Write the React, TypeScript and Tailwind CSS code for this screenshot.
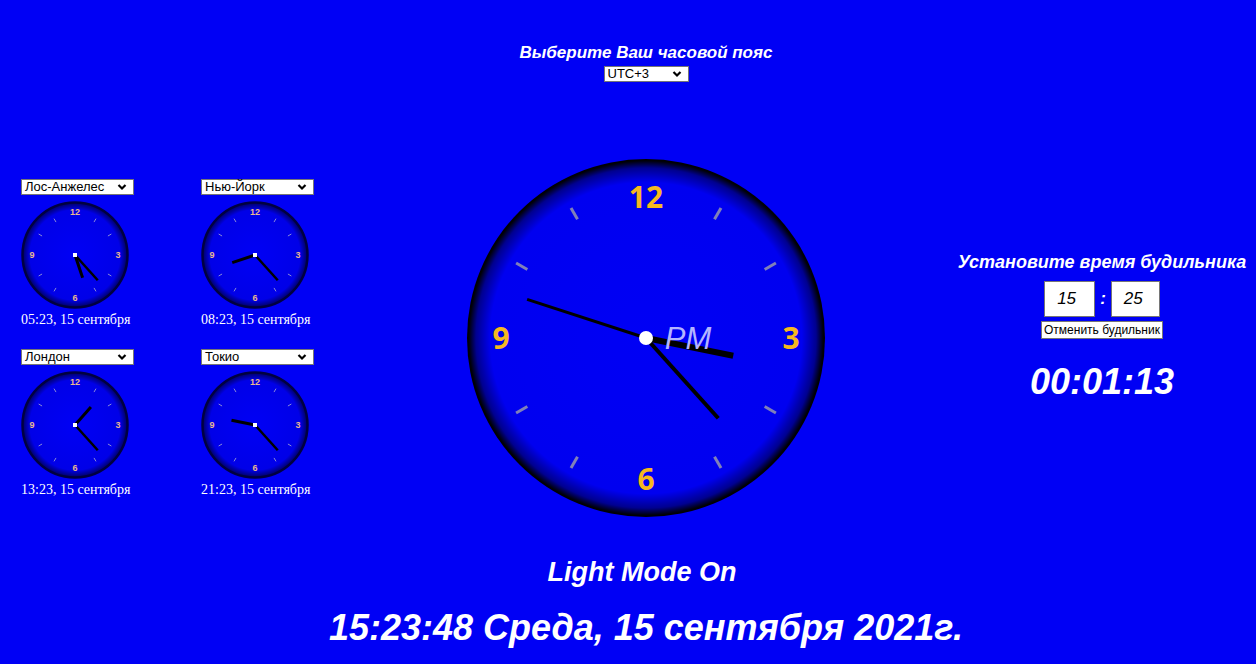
import React from 'react';

const ARIAL = { fontFamily: '"Liberation Sans", Arial, sans-serif' };
const SERIF = { fontFamily: '"Liberation Serif", "Times New Roman", serif' };

const pt = (cx: number, cy: number, deg: number, r: number) => {
  const a = (deg * Math.PI) / 180;
  return [cx + r * Math.sin(a), cy - r * Math.cos(a)];
};

const Chevron: React.FC = () => (
  <svg width="10" height="7" viewBox="0 0 10 7" className="absolute right-[6px] top-1/2 -translate-y-1/2">
    <path d="M1.5 1.5 L5 5 L8.5 1.5" fill="none" stroke="#000" strokeWidth="2.2" />
  </svg>
);

const Select: React.FC<{ value: string; w: string }> = ({ value, w }) => (
  <div className={`relative ${w} h-[16px] bg-white border border-[#767676] text-[13px] leading-[14px] text-black pl-[3px]`} style={ARIAL}>
    {value}
    <Chevron />
  </div>
);

const SmallClock: React.FC<{ h: number; m: number; city: string; label: string }> = ({ h, m, city, label }) => {
  const c = 54;
  const hourDeg = (h % 12) * 30 + m * 0.5;
  const minDeg = m * 6;
  const [hx, hy] = pt(c, c, hourDeg, 24);
  const [mx, my] = pt(c, c, minDeg, 34);
  return (
    <div className="flex flex-col w-[113px]">
      <Select value={city} w="w-[113px]" />
      <svg width="108" height="108" viewBox="0 0 108 108" className="mt-[6px]">
        <defs>
          <radialGradient id="sg" cx="50%" cy="50%" r="50%">
            <stop offset="0%" stopColor="#0000f5" />
            <stop offset="86%" stopColor="#0000e8" />
            <stop offset="100%" stopColor="#000060" />
          </radialGradient>
        </defs>
        <circle cx={c} cy={c} r={52.5} fill="url(#sg)" stroke="#000040" strokeWidth="2.5" />
        {[1, 2, 4, 5, 7, 8, 10, 11].map((i) => {
          const [x1, y1] = pt(c, c, i * 30, 38);
          const [x2, y2] = pt(c, c, i * 30, 42);
          return <line key={i} x1={x1} y1={y1} x2={x2} y2={y2} stroke="#8a8ad8" strokeWidth="1" />;
        })}
        {[
          ['12', 0],
          ['3', 90],
          ['6', 180],
          ['9', 270],
        ].map(([t, d]) => {
          const [x, y] = pt(c, c, d as number, 43);
          return (
            <text key={t} x={x} y={y + 3} textAnchor="middle" fontSize="9" fontWeight="bold" fill="#e8b890" style={ARIAL}>
              {t}
            </text>
          );
        })}
        <line x1={c} y1={c} x2={hx} y2={hy} stroke="#000" strokeWidth="3" />
        <line x1={c} y1={c} x2={mx} y2={my} stroke="#000" strokeWidth="2.5" />
        <rect x={c - 2} y={c - 2} width="4" height="4" fill="#fff" />
      </svg>
      <div className="text-white text-[14px] leading-[16px] mt-[3px] whitespace-nowrap" style={SERIF}>
        {label}
      </div>
    </div>
  );
};

const BigClock: React.FC = () => {
  const c = 180;
  const [hx, hy] = pt(c, c, 101.5, 89);
  const [mx, my] = pt(c, c, 138, 108);
  const [sx, sy] = pt(c, c, 288, 125);
  return (
    <svg width="360" height="360" viewBox="0 0 360 360">
      <defs>
        <radialGradient id="bg" cx="50%" cy="50%" r="50%">
          <stop offset="0%" stopColor="#0000f5" />
          <stop offset="87%" stopColor="#0000f0" />
          <stop offset="95%" stopColor="#000090" />
          <stop offset="99%" stopColor="#000008" />
          <stop offset="100%" stopColor="#000000" />
        </radialGradient>
      </defs>
      <circle cx={c} cy={c} r={179} fill="url(#bg)" />
      {[1, 2, 4, 5, 7, 8, 10, 11].map((i) => {
        const [x1, y1] = pt(c, c, i * 30, 137);
        const [x2, y2] = pt(c, c, i * 30, 150);
        return <line key={i} x1={x1} y1={y1} x2={x2} y2={y2} stroke="#8080b8" strokeWidth="3" />;
      })}
      {[
        ['12', 0, 141],
        ['3', 90, 145],
        ['6', 180, 141],
        ['9', 270, 145],
      ].map(([t, d, r]) => {
        const [x, y] = pt(c, c, d as number, r as number);
        return (
          <text key={t as string} x={x} y={y + 11} textAnchor="middle" fontSize="30" fontWeight="bold" fill="#f5b820" style={{ fontFamily: '"Open Sans", Roboto, sans-serif' }}>
            {t}
          </text>
        );
      })}
      <line x1={c} y1={c} x2={hx} y2={hy} stroke="#000" strokeWidth="6" />
      <line x1={c} y1={c} x2={mx} y2={my} stroke="#000" strokeWidth="4" />
      <line x1={c} y1={c} x2={sx} y2={sy} stroke="#000" strokeWidth="3" />
      <text x={222} y={191} textAnchor="middle" fontSize="31" fontStyle="italic" fill="#b4b4ff" style={ARIAL}>
        PM
      </text>
      <circle cx={c} cy={c} r="7" fill="#fff" />
    </svg>
  );
};

const App: React.FC = () => {
  return (
    <div className="w-full h-[664px] bg-[#0000f5] overflow-hidden text-white" style={ARIAL}>
      <div className="pl-[36px] pt-[43px] flex flex-col items-center">
        <h2 className="text-[17px] leading-[20px] font-bold italic">Выберите Ваш часовой пояс</h2>
        <div className="mt-[3px]">
          <Select value="UTC+3" w="w-[85px]" />
        </div>
      </div>

      <div className="flex items-center mt-[76px] pl-[21px]">
        <div className="grid grid-cols-2 gap-x-[67px] gap-y-[21px] w-[293px]">
          <SmallClock h={5} m={23} city="Лос-Анжелес" label="05:23, 15 сентября" />
          <SmallClock h={8} m={23} city="Нью-Йорк" label="08:23, 15 сентября" />
          <SmallClock h={13} m={23} city="Лондон" label="13:23, 15 сентября" />
          <SmallClock h={21} m={23} city="Токио" label="21:23, 15 сентября" />
        </div>

        <div className="ml-[152px]">
          <BigClock />
        </div>

        <div className="ml-[130px] w-[292px] flex flex-col items-center mb-[22px]">
          <h3 className="text-[18px] leading-[20px] font-bold italic whitespace-nowrap">Установите время будильника</h3>
          <div className="flex items-center mt-[9px]">
            <div className="w-[51px] h-[36px] bg-white border border-[#767676] text-black italic text-[17px] leading-[34px] pl-[12px]">15</div>
            <span className="mx-[5px] font-bold italic text-[17px]">:</span>
            <div className="w-[49px] h-[36px] bg-white border border-[#767676] text-black italic text-[17px] leading-[34px] pl-[12px]">25</div>
          </div>
          <button className="mt-[4px] h-[18px] px-[2px] bg-white border border-[#767676] text-black text-[12px] leading-[16px]">
            Отменить будильник
          </button>
          <div className="mt-[23px] text-[36px] leading-[40px] font-bold italic">00:01:13</div>
        </div>
      </div>

      <div className="pl-[36px] flex flex-col items-center mt-[40px]">
        <div className="text-[27px] leading-[28px] font-bold italic mr-[8px]">Light Mode On</div>
        <div className="mt-[21px] text-[36px] leading-[42px] font-bold italic">15:23:48 Среда, 15 сентября 2021г.</div>
      </div>
    </div>
  );
};

export default App;
